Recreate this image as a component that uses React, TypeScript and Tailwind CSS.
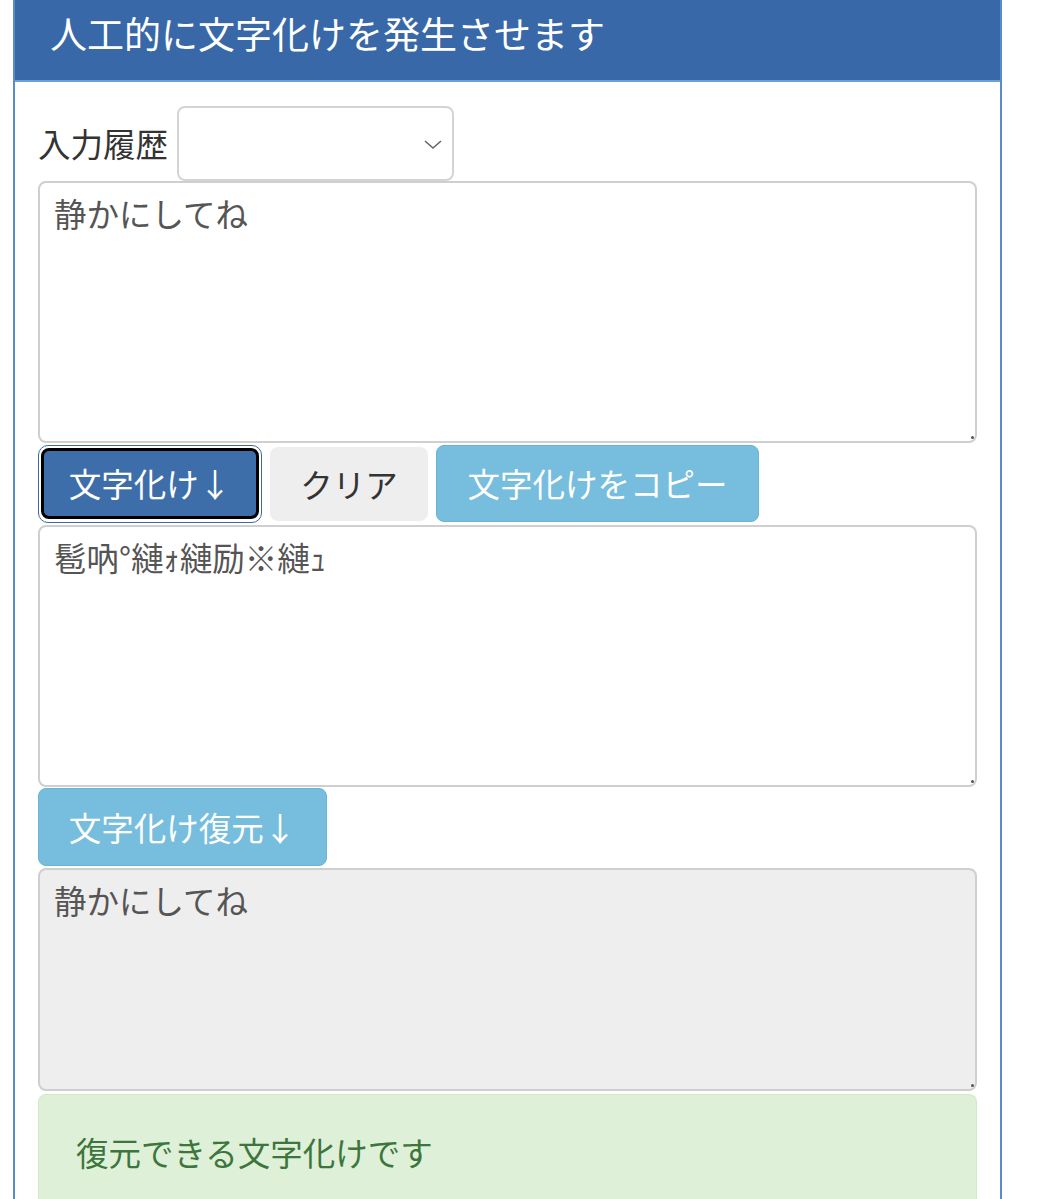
const font = "font-['Hiragino_Sans','Noto_Sans_CJK_JP',sans-serif]";

const Field = ({ value, readOnly, height, gray }: { value: string; readOnly?: boolean; height: string; gray?: boolean }) => (
  <div className="relative">
    <textarea
      readOnly={readOnly}
      defaultValue={value}
      className={`block w-full ${height} resize-none rounded-[8px] border-2 border-[#cfcfcf] px-[14px] py-[7px] text-[32.5px] leading-[46px] text-[#555555] outline-none ${
        gray ? "bg-[#eeeeee]" : "bg-white"
      }`}
    />
    <span className="absolute bottom-[4px] right-[3px] h-[3px] w-[3px] rounded-full bg-[#555]" />
  </div>
);

export default function App() {
  return (
    <div className={`min-h-[1199px] w-[1038px] bg-white ${font}`}>
      <div className="ml-[13px] w-[989px] border-x-2 border-[#5a8ccb]">
        <div className="flex h-[82px] items-center border-b-2 border-[#6c9fd8] bg-[#3868a8] pl-[35px] pb-[12px] text-[37px] text-white">
          人工的に文字化けを発生させます
        </div>

        <div className="flex flex-col px-[23px] pt-[24px]">
          <div className="flex items-center gap-[9px]">
            <span className="text-[32.5px] text-[#333]">入力履歴</span>
            <div className="flex h-[75px] w-[277px] items-center justify-end rounded-[8px] border-2 border-[#d4d4d4] pr-[8px]">
              <svg width="22" height="14" viewBox="0 0 22 14" fill="none" stroke="#666" strokeWidth="1.6">
                <path d="M3 4l8 7 8-7" />
              </svg>
            </div>
          </div>

          <Field value="静かにしてね" height="h-[262px]" />

          <div className="flex gap-[8px] pt-[2px]">
            <div className="rounded-[10px] border border-[#3a6aa6] bg-white p-[2px]">
              <button className="h-[71px] w-[218px] rounded-[8px] border-[3px] border-black bg-[#3e6ea9] text-[32.5px] text-white">
                文字化け↓
              </button>
            </div>
            <button className="my-[2px] h-[74px] w-[158px] rounded-[8px] bg-[#eeeeee] text-[32.5px] text-[#333]">
              クリア
            </button>
            <button className="h-[77px] w-[323px] rounded-[8px] border border-[#69b3d6] bg-[#77bddd] text-[32.5px] text-white">
              文字化けをコピー
            </button>
          </div>

          <div className="pt-[2px]">
            <Field value="髱吶°縺ｫ縺励※縺ｭ" height="h-[262px]" />
          </div>

          <div className="flex pt-[1px]">
            <button className="h-[78px] w-[289px] rounded-[8px] border border-[#69b3d6] bg-[#77bddd] text-[32.5px] text-white">
              文字化け復元↓
            </button>
          </div>

          <div className="pt-[2px]">
            <Field value="静かにしてね" readOnly gray height="h-[223px]" />
          </div>

          <div className="mt-[3px] h-[120px] rounded-t-[8px] border border-b-0 border-[#d6e9c6] bg-[#dff0d8] px-[37px] pt-[34px] text-[32.5px] leading-[46px] text-[#3c763d]">
            復元できる文字化けです
          </div>
        </div>
      </div>
    </div>
  );
}
